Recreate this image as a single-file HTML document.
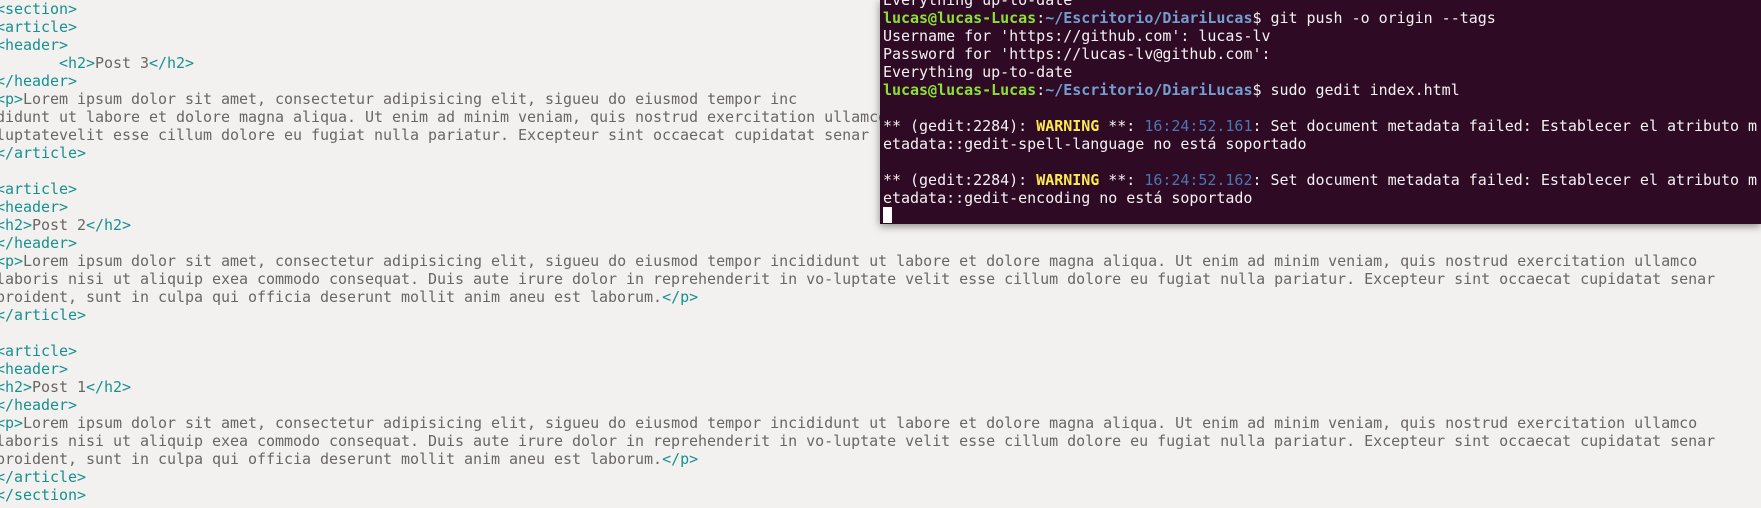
<!DOCTYPE html>
<html><head><meta charset="utf-8"><style>
html,body{margin:0;padding:0;width:1761px;height:508px;overflow:hidden;background:#f2f1f0;}
.ed{position:absolute;left:-4px;top:0;font-family:"DejaVu Sans Mono","Liberation Mono",monospace;font-size:15px;letter-spacing:-0.03px;line-height:18px;color:#6b6663;white-space:pre;}
.t{color:#17918f;}
.term{position:absolute;left:880px;top:0;width:881px;height:224px;background:#2e0a24;box-shadow:0 2px 8px rgba(0,0,0,.45);overflow:hidden;}
.tt{position:absolute;left:3px;top:-9px;font-family:"DejaVu Sans Mono","Liberation Mono",monospace;font-size:15px;letter-spacing:-0.02px;line-height:18px;color:#f2f2f2;white-space:pre;}
.g{color:#8ae234;font-weight:bold}.b{color:#729fcf;font-weight:bold}.y{color:#fce94f;font-weight:bold}.ts{color:#4a77b4}
.cur{position:absolute;left:3px;top:207px;width:9px;height:16px;background:#fff;}
</style></head><body>
<div class="ed"><span class="t">&lt;section&gt;</span>
<span class="t">&lt;article&gt;</span>
<span class="t">&lt;header&gt;</span>
       <span class="t">&lt;h2&gt;</span>Post 3<span class="t">&lt;/h2&gt;</span>
<span class="t">&lt;/header&gt;</span>
<span class="t">&lt;p&gt;</span>Lorem ipsum dolor sit amet, consectetur adipisicing elit, sigueu do eiusmod tempor inc
didunt ut labore et dolore magna aliqua. Ut enim ad minim veniam, quis nostrud exercitation ullamco
luptatevelit esse cillum dolore eu fugiat nulla pariatur. Excepteur sint occaecat cupidatat senar
<span class="t">&lt;/article&gt;</span>

<span class="t">&lt;article&gt;</span>
<span class="t">&lt;header&gt;</span>
<span class="t">&lt;h2&gt;</span>Post 2<span class="t">&lt;/h2&gt;</span>
<span class="t">&lt;/header&gt;</span>
<span class="t">&lt;p&gt;</span>Lorem ipsum dolor sit amet, consectetur adipisicing elit, sigueu do eiusmod tempor incididunt ut labore et dolore magna aliqua. Ut enim ad minim veniam, quis nostrud exercitation ullamco
laboris nisi ut aliquip exea commodo consequat. Duis aute irure dolor in reprehenderit in vo-luptate velit esse cillum dolore eu fugiat nulla pariatur. Excepteur sint occaecat cupidatat senar
proident, sunt in culpa qui officia deserunt mollit anim aneu est laborum.<span class="t">&lt;/p&gt;</span>
<span class="t">&lt;/article&gt;</span>

<span class="t">&lt;article&gt;</span>
<span class="t">&lt;header&gt;</span>
<span class="t">&lt;h2&gt;</span>Post 1<span class="t">&lt;/h2&gt;</span>
<span class="t">&lt;/header&gt;</span>
<span class="t">&lt;p&gt;</span>Lorem ipsum dolor sit amet, consectetur adipisicing elit, sigueu do eiusmod tempor incididunt ut labore et dolore magna aliqua. Ut enim ad minim veniam, quis nostrud exercitation ullamco
laboris nisi ut aliquip exea commodo consequat. Duis aute irure dolor in reprehenderit in vo-luptate velit esse cillum dolore eu fugiat nulla pariatur. Excepteur sint occaecat cupidatat senar
proident, sunt in culpa qui officia deserunt mollit anim aneu est laborum.<span class="t">&lt;/p&gt;</span>
<span class="t">&lt;/article&gt;</span>
<span class="t">&lt;/section&gt;</span></div>
<div class="term"><div class="tt">Everything up-to-date
<span class="g">lucas@lucas-Lucas</span>:<span class="b">~/Escritorio/DiariLucas</span>$ git push -o origin --tags
Username for 'https://github.com': lucas-lv
Password for 'https://lucas-lv@github.com':
Everything up-to-date
<span class="g">lucas@lucas-Lucas</span>:<span class="b">~/Escritorio/DiariLucas</span>$ sudo gedit index.html

** (gedit:2284): <span class="y">WARNING</span> **: <span class="ts">16:24:52.161</span>: Set document metadata failed: Establecer el atributo m
etadata::gedit-spell-language no está soportado

** (gedit:2284): <span class="y">WARNING</span> **: <span class="ts">16:24:52.162</span>: Set document metadata failed: Establecer el atributo m
etadata::gedit-encoding no está soportado</div><div class="cur"></div></div>
</body></html>
